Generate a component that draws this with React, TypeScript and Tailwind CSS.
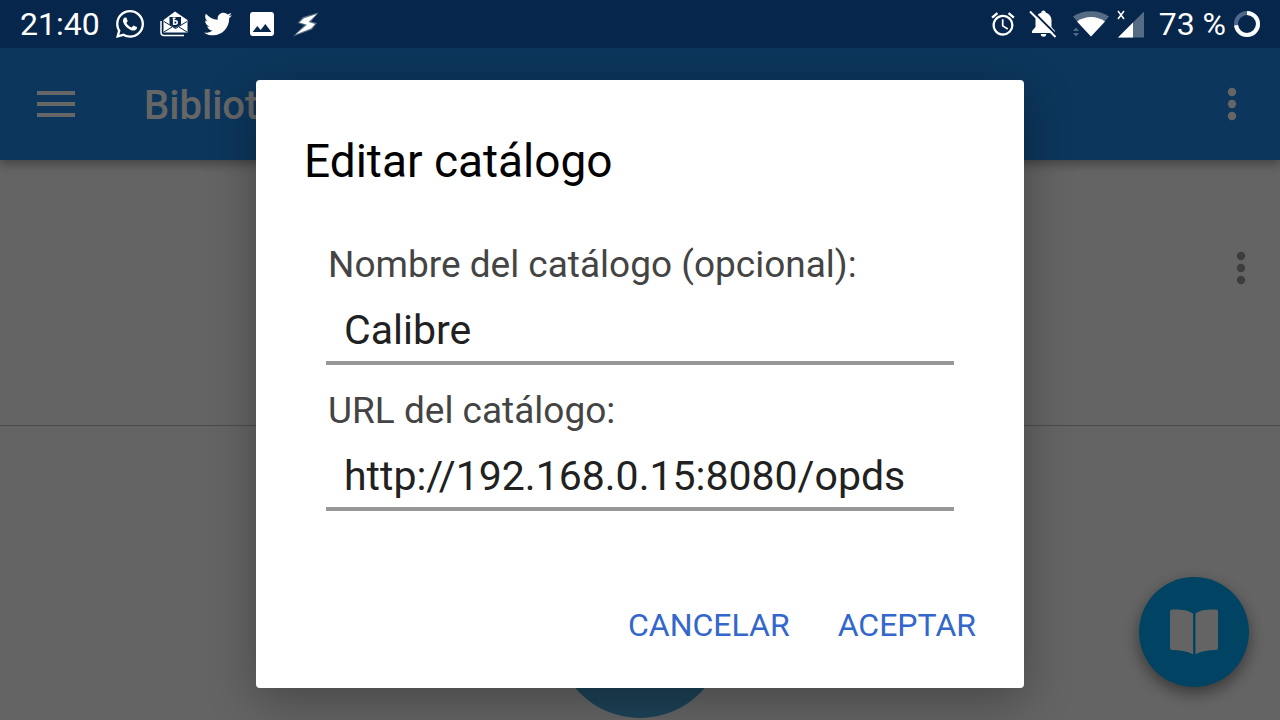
import { useState } from "react";
import { FaTwitter, FaWhatsapp } from "react-icons/fa";
import { MdAlarm, MdImage } from "react-icons/md";

const MailIcon = () => (
    <svg viewBox="0 0 28 26" className="w-7 h-[26px]" aria-hidden="true">
        <path d="M1 10V21.5a3 3 0 0 0 3 3H24" fill="none" stroke="#fff" strokeWidth="1.5" />
        <path d="M3.500 9 15 .5 27.500 9v12.500h-24z" fill="#fff" />
        <path d="M9.500 6h11.500v7.500l-5.700 3.500-5.800-3.500z" fill="#07264b" />
        <path d="M4 10.500l11.500 7L27 10.500M4 21l8-5M27 21l-8-5" fill="none" stroke="#07264b" strokeWidth="1" />
        <path d="M13.700 6.800v6.400h1.800a1.600 1.600 0 0 0 0-3.400h-1.800M12.700 7.200h2.800" fill="none" stroke="#fff" strokeWidth="1.600" />
    </svg>
);

const BoltIcon = () => (
    <svg viewBox="0 0 28 26" className="w-7 h-[26px]" aria-hidden="true">
        <path d="M26.500 1.500 11 6 5.500 12l7 2L1 25.500 20 18.500l5-6.500-6-1.500z" fill="#fff" opacity=".35" />
        <path d="M25 3 12 7.200 7.500 11.500l7.500 2.300L3.500 23.500 19 17.500l4-4.500-6.500-2z" fill="#fff" />
    </svg>
);

const BellOffIcon = () => (
    <svg viewBox="0 0 28 28" className="w-7 h-7 mr-2" aria-hidden="true">
        <path d="M14.500.5c1.500 0 2.200 1 2.300 2.300 3.600 1 5.700 4 5.700 7.700v6.500l3.500 4v2H3v-2l3.500-4v-6.500c0-3.700 2.100-6.700 5.700-7.700.1-1.300.8-2.300 2.300-2.300z" fill="#fff" />
        <path d="M11.800 24h5.400a2.700 2.700 0 0 1-5.400 0z" fill="#fff" />
        <path d="M2.500 0 28 25.500" stroke="#07264b" strokeWidth="2" />
        <path d="M1 1.500 26.500 27" stroke="#fff" strokeWidth="2" />
    </svg>
);

const WifiIcon = () => (
    <svg viewBox="0 0 36 26" className="w-9 h-[26px]" aria-hidden="true">
        <path d="M0 5.500C10-1.500 26-1.500 36 5.500L18 25.500z" fill="#fff" opacity=".32" />
        <path d="M4 10.500C12 4.500 24 4.500 32 10.500L18 25.500z" fill="#fff" />
        <path d="M-1 21V15H7V26H-1z" fill="#07264b" />
        <path d="M0 20l3-3.500L6 20zM0 22l3 3.500L6 22z" fill="#51688a" />
    </svg>
);

const SignalIcon = () => (
    <svg viewBox="0 0 28 28" className="w-7 h-7" aria-hidden="true">
        <path d="M1 27.500 27 1.500v26z" fill="#fff" opacity=".32" />
        <path d="M1 27.500 16 12.500v15z" fill="#fff" />
        <path d="M1 1l6 8M7 1l-6 8" stroke="#fff" strokeWidth="1.500" />
    </svg>
);

const BatteryIcon = () => (
    <svg viewBox="0 0 26 26" className="w-[26px] h-[26px]" aria-hidden="true">
        <circle cx="13" cy="13" r="11" fill="none" stroke="#51688a" strokeWidth="4" />
        <circle cx="13" cy="13" r="11" fill="none" stroke="#fff" strokeWidth="4" pathLength="100" strokeDasharray="73 27" transform="rotate(-90 13 13)" />
    </svg>
);

const MenuIcon = () => (
    <svg viewBox="0 0 38 26" className="w-[38px] h-[26px]" fill="currentColor" aria-hidden="true">
        <path d="M0 0h38v4H0zM0 11h38v4H0zM0 22h38v4H0z" />
    </svg>
);

const DotsIcon = () => (
    <svg viewBox="0 0 10 34" className="w-[10px] h-[34px]" fill="currentColor" aria-hidden="true">
        <circle cx="5" cy="5" r="4.200" />
        <circle cx="5" cy="17" r="4.200" />
        <circle cx="5" cy="29" r="4.200" />
    </svg>
);

const BookIcon = () => (
    <svg viewBox="0 0 48 46" className="w-12 h-[46px]" fill="currentColor" aria-hidden="true">
        <path d="M23 4.500v41C17 42 9 41 2 41Q0 41 0 39V2.500Q0 .5 2 .5C9 .2 17 .5 23 4.500z" />
        <path d="M25.500 4.500v41C31 42 39 41 46 41Q48 41 48 39V2.500Q48 .5 46 .5C39 .2 31 .5 25.500 4.500z" />
    </svg>
);

const StatusBar = () => {
    return (
        <div className="h-12 px-5 flex items-center justify-between bg-[#07264b] text-white text-[32px] leading-12">
            <div className="flex items-center gap-4">
                <span>21:40</span>
                <FaWhatsapp className="w-8 h-8 -mx-0.5" />
                <MailIcon />
                <FaTwitter className="w-7 h-7" />
                <MdImage className="w-8 h-8 -mx-0.5" />
                <BoltIcon />
            </div>
            <div className="flex items-center gap-2">
                <MdAlarm className="w-7 h-7 mr-1" />
                <BellOffIcon />
                <WifiIcon />
                <SignalIcon />
                <span className="ml-1.5">73 %</span>
                <BatteryIcon />
            </div>
        </div>
    );
};

const EditDialog = () => {
    const [name, setName] = useState("Calibre");
    const [url, setUrl] = useState("http://192.168.0.15:8080/opds");

    return (
        <div role="dialog" aria-labelledby="dialog-title" className="w-3/5 bg-white rounded-sm shadow-[0_12px_48px_rgba(0,0,0,0.3)] pt-[53px] pb-[31px]">
            <h2 id="dialog-title" className="px-12 text-[46px] leading-14 text-black">Editar catálogo</h2>
            <form className="mt-13" onSubmit={(e) => e.preventDefault()}>
                <div className="px-[70px] flex flex-col">
                    <label htmlFor="name" className="pl-0.5 text-[37px] leading-12 text-[#444]">Nombre del catálogo (opcional):</label>
                    <input id="name" type="text" value={name} onChange={(e) => setName(e.target.value)} className="h-19 w-full pt-2.5 pl-[18px] text-[41px] text-[#212121] border-b-4 border-[#979797] outline-none" />
                    <label htmlFor="url" className="mt-[22px] pl-0.5 text-[37px] leading-12 text-[#444]">URL del catálogo:</label>
                    <input id="url" type="text" value={url} onChange={(e) => setUrl(e.target.value)} className="h-19 w-full pt-2.5 pl-[18px] text-[41px] text-[#212121] border-b-4 border-[#979797] outline-none" />
                </div>
                <div className="mt-[82px] px-12 flex justify-end gap-12 text-[32px] leading-16 text-[#3367cc]">
                    <button type="button">CANCELAR</button>
                    <button type="submit">ACEPTAR</button>
                </div>
            </form>
        </div>
    );
};

export default function App() {
    return (
        <div className="min-h-screen flex flex-col font-[Roboto,sans-serif]">
            <StatusBar />
            <div className="relative flex-1 flex flex-col overflow-hidden bg-[#fafafa]">
                <header className="relative h-28 shrink-0 pl-[37px] pr-[43px] flex items-center bg-[#1e88e5] text-white shadow-[0_4px_10px_rgba(0,0,0,0.35)]">
                    <button type="button" aria-label="Menú"><MenuIcon /></button>
                    <h1 className="ml-[69px] pt-1 flex-1 text-[40px] font-medium">Biblioteca</h1>
                    <button type="button" aria-label="Más opciones"><DotsIcon /></button>
                </header>
                <div className="h-[266px] shrink-0 pt-[91px] px-[34px] flex items-start justify-end border-b border-[#bbb] text-[#999]">
                    <button type="button" aria-label="Opciones del catálogo"><DotsIcon /></button>
                </div>
                <div className="flex-1 flex items-end justify-center pb-0.5">
                    <div className="w-[170px] h-[170px] rounded-full bg-[#46a5d7]" />
                </div>
                <button type="button" aria-label="Leer" className="absolute right-[31px] bottom-[33px] w-[110px] h-[110px] rounded-full flex items-center justify-center bg-[#03a9f4] text-[#fafafa] shadow-[0_6px_16px_rgba(0,0,0,0.45)]">
                    <BookIcon />
                </button>
                <div className="absolute inset-0 flex items-center justify-center bg-black/60">
                    <EditDialog />
                </div>
            </div>
        </div>
    );
}
